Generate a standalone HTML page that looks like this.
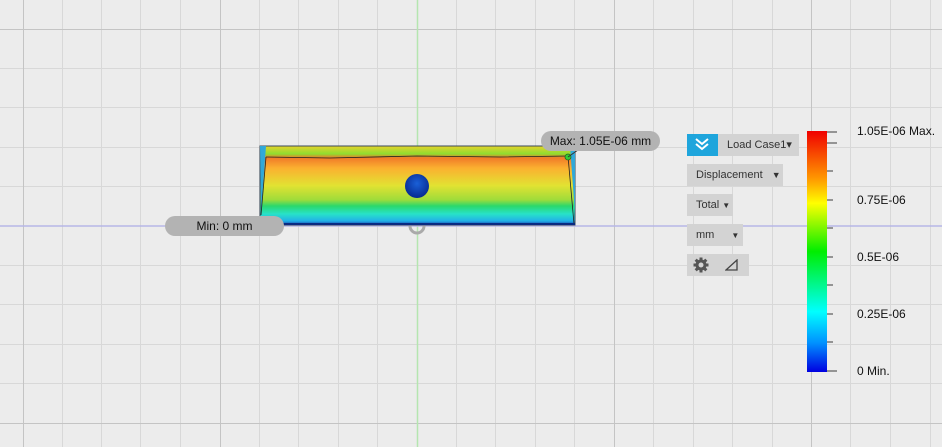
<!DOCTYPE html>
<html><head><style>
body{margin:0;width:942px;height:447px;overflow:hidden;background:#ececec;font-family:"Liberation Sans",sans-serif;position:relative}
.pill{position:absolute;background:#b3b3b3;border-radius:12px;font-size:12px;color:#111;text-align:center;line-height:20px;height:20px}
.btn{position:absolute;background:#d3d3d3;font-size:11px;color:#333;height:22px;line-height:22px}
.lbl{position:absolute;font-size:12px;color:#111;left:857px}
</style></head><body>
<svg width="942" height="447" style="position:absolute;left:0;top:0">
<g stroke="#d8d8d8" stroke-width="1">
<line x1="62.5" y1="0" x2="62.5" y2="447"/><line x1="101.5" y1="0" x2="101.5" y2="447"/><line x1="140.5" y1="0" x2="140.5" y2="447"/><line x1="180.5" y1="0" x2="180.5" y2="447"/><line x1="259.5" y1="0" x2="259.5" y2="447"/><line x1="298.5" y1="0" x2="298.5" y2="447"/><line x1="338.5" y1="0" x2="338.5" y2="447"/><line x1="377.5" y1="0" x2="377.5" y2="447"/><line x1="456.5" y1="0" x2="456.5" y2="447"/><line x1="495.5" y1="0" x2="495.5" y2="447"/><line x1="535.5" y1="0" x2="535.5" y2="447"/><line x1="574.5" y1="0" x2="574.5" y2="447"/><line x1="653.5" y1="0" x2="653.5" y2="447"/><line x1="693.5" y1="0" x2="693.5" y2="447"/><line x1="732.5" y1="0" x2="732.5" y2="447"/><line x1="772.5" y1="0" x2="772.5" y2="447"/><line x1="850.5" y1="0" x2="850.5" y2="447"/><line x1="890.5" y1="0" x2="890.5" y2="447"/><line x1="930.5" y1="0" x2="930.5" y2="447"/>
<line x1="0" y1="68.5" x2="942" y2="68.5"/><line x1="0" y1="107.5" x2="942" y2="107.5"/><line x1="0" y1="147.5" x2="942" y2="147.5"/><line x1="0" y1="186.5" x2="942" y2="186.5"/><line x1="0" y1="265.5" x2="942" y2="265.5"/><line x1="0" y1="304.5" x2="942" y2="304.5"/><line x1="0" y1="344.5" x2="942" y2="344.5"/><line x1="0" y1="383.5" x2="942" y2="383.5"/>
</g>
<g stroke="#c4c4c4" stroke-width="1">
<line x1="23.5" y1="0" x2="23.5" y2="447"/><line x1="220.5" y1="0" x2="220.5" y2="447"/><line x1="614.5" y1="0" x2="614.5" y2="447"/><line x1="811.5" y1="0" x2="811.5" y2="447"/>
<line x1="0" y1="29.5" x2="942" y2="29.5"/><line x1="0" y1="423.5" x2="942" y2="423.5"/>
</g>
<line x1="417.5" y1="0" x2="417.5" y2="447" stroke="#b5e6b0" stroke-width="1.5"/>
<line x1="0" y1="226" x2="942" y2="226" stroke="#b6b6e6" stroke-width="1.5"/>
<defs>
<linearGradient id="g" x1="0" y1="0" x2="0" y2="1">
<stop offset="0" stop-color="#e6d32a"/><stop offset="0.1" stop-color="#8fdc30"/><stop offset="0.15" stop-color="#f07a28"/><stop offset="0.28" stop-color="#fbb030"/><stop offset="0.5" stop-color="#e2e232"/><stop offset="0.68" stop-color="#9fdc3a"/><stop offset="0.76" stop-color="#2ad86c"/><stop offset="0.86" stop-color="#28e2c8"/><stop offset="0.95" stop-color="#22b0e8"/><stop offset="1" stop-color="#1238a8"/></linearGradient>
<linearGradient id="cb" x1="0" y1="0" x2="0" y2="1">
<stop offset="0" stop-color="#f00000"/><stop offset="0.2" stop-color="#ff9a00"/><stop offset="0.3" stop-color="#ffff00"/><stop offset="0.5" stop-color="#00ee00"/><stop offset="0.75" stop-color="#00ffff"/><stop offset="0.88" stop-color="#0090ff"/><stop offset="1" stop-color="#0000e0"/></linearGradient>
<radialGradient id="ball" cx="0.5" cy="0.4" r="0.6"><stop offset="0" stop-color="#1a60d8"/><stop offset="1" stop-color="#062a90"/></radialGradient>
</defs>
<rect x="260" y="146" width="315" height="79" fill="url(#g)" stroke="#3a4a5a" stroke-width="1"/>
<polygon points="260,146 266,146 261,214" fill="#30a8d8"/><polygon points="575,146 570,146 575,214" fill="#30a8d8"/>
<polyline points="266,157 330,158 417,156 500,157 568,156" fill="none" stroke="#222" stroke-width="0.8"/>
<line x1="266" y1="157" x2="261" y2="215" stroke="#222" stroke-width="0.8"/>
<line x1="568" y1="156" x2="574" y2="224" stroke="#222" stroke-width="0.8"/>
<rect x="260" y="223" width="315" height="2" fill="#0a2a80"/>
<circle cx="417" cy="186" r="12" fill="url(#ball)"/>
<path d="M410 226a7 7 0 0 0 14 0" fill="none" stroke="#aaa" stroke-width="3"/>
<circle cx="568" cy="157" r="3" fill="#3c3" stroke="#262" stroke-width="0.8"/>
<line x1="568" y1="157" x2="578" y2="150" stroke="#333"/>
<rect x="807" y="131" width="20" height="241" fill="url(#cb)"/>
<g stroke="#777" stroke-width="1.5">
<line x1="827" y1="132" x2="837" y2="132"/><line x1="827" y1="143" x2="837" y2="143"/><line x1="827" y1="171" x2="833" y2="171"/><line x1="827" y1="200" x2="833" y2="200"/><line x1="827" y1="228" x2="833" y2="228"/><line x1="827" y1="257" x2="833" y2="257"/><line x1="827" y1="285" x2="833" y2="285"/><line x1="827" y1="314" x2="833" y2="314"/><line x1="827" y1="342" x2="833" y2="342"/><line x1="827" y1="371" x2="837" y2="371"/>
</g>
</svg>
<div class="pill" style="left:541px;top:131px;width:119px">Max: 1.05E-06 mm</div>
<div class="pill" style="left:165px;top:216px;width:119px">Min: 0 mm</div>
<div style="position:absolute;left:687px;top:134px;width:31px;height:22px;background:#1ea5dc"><svg width="31" height="22"><path d="M9 5l6 5 6-5M9 10l6 5 6-5" fill="none" stroke="#fff" stroke-width="2"/></svg></div>
<div class="btn" style="left:718px;top:134px;width:81px;padding-left:9px;box-sizing:border-box">Load Case1▾</div>
<div class="btn" style="left:687px;top:164px;width:96px;padding-left:9px;box-sizing:border-box">Displacement <span style="font-size:9px;margin-left:6px">▼</span></div>
<div class="btn" style="left:687px;top:194px;width:46px;padding-left:9px;box-sizing:border-box">Total <span style="font-size:8px">▼</span></div>
<div class="btn" style="left:687px;top:224px;width:56px;padding-left:9px;box-sizing:border-box">mm <span style="font-size:8px;margin-left:14px">▼</span></div>
<div class="btn" style="left:687px;top:254px;width:62px">
<svg style="position:absolute;left:6px;top:3px" width="16" height="16" viewBox="0 0 16 16"><g fill="#555"><circle cx="8" cy="8" r="5.5"/><rect x="6.5" y="0.5" width="3" height="15"/><rect x="0.5" y="6.5" width="15" height="3"/><rect x="6.5" y="0.5" width="3" height="15" transform="rotate(45 8 8)"/><rect x="6.5" y="0.5" width="3" height="15" transform="rotate(-45 8 8)"/></g><circle cx="8" cy="8" r="2.5" fill="#d3d3d3"/></svg>
<svg style="position:absolute;left:38px;top:5px" width="14" height="12"><path d="M1 11L12 1V11Z" fill="none" stroke="#444" stroke-width="1.3"/></svg></div>
<div class="lbl" style="top:124px">1.05E-06 Max.</div>
<div class="lbl" style="top:193px">0.75E-06</div>
<div class="lbl" style="top:250px">0.5E-06</div>
<div class="lbl" style="top:307px">0.25E-06</div>
<div class="lbl" style="top:364px">0 Min.</div>
</body></html>
